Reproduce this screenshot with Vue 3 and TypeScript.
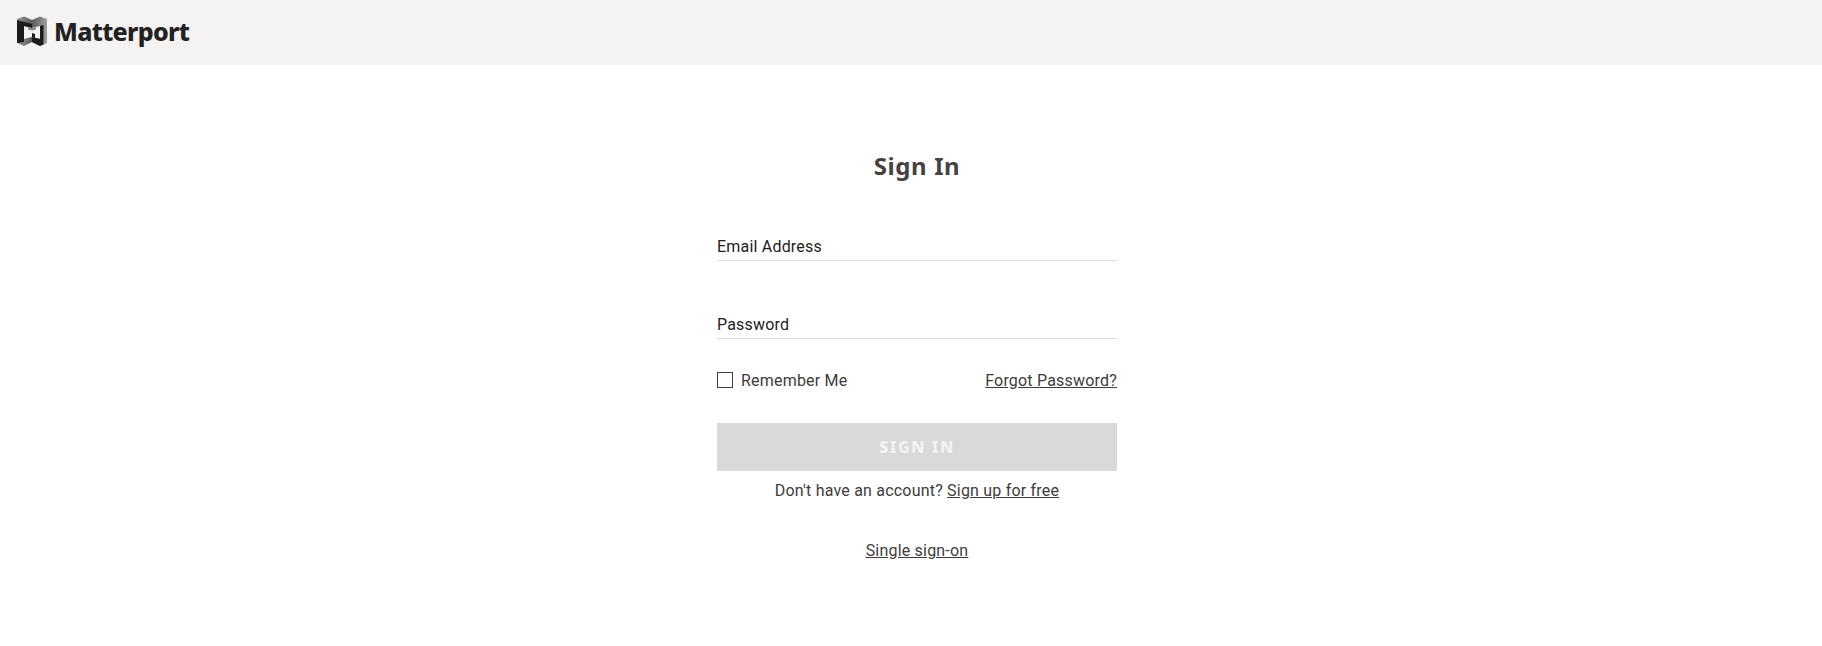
<script setup lang="ts">
import { ref } from 'vue';

const email = ref('');
const password = ref('');
const remember = ref(false);
</script>

<template>
    <div class="page">
        <header class="topbar">
            <a class="brand" href="#">
                <svg class="brand-mark" viewBox="0 0 30 30" width="30" height="30" aria-hidden="true">
                    <defs>
                        <linearGradient id="mark-top" x1="0" y1="0" x2="1" y2="0">
                            <stop offset="0" stop-color="#9a9a9a" />
                            <stop offset="0.5" stop-color="#5a5a5a" />
                            <stop offset="1" stop-color="#a0a0a0" />
                        </linearGradient>
                    </defs>
                    <!-- grey body with the window cut out -->
                    <path fill-rule="evenodd" fill="url(#mark-top)" d="M0 3 L7 0.5 L15 4 L23 0.5 L30 3 L30 27 L23 30 L15 26 L7 30 L0 27 Z M7 10 L15 12 L23 10 L23 23 L15 21 L7 23 Z" />
                    <!-- dark left column and band -->
                    <path fill="#1c1c1c" d="M0 4 L15 8 L15 12 L7 10 L7 26 L0 27 Z" />
                    <!-- dark right column and lower right face -->
                    <path fill="#1c1c1c" d="M23 10 L26.5 9 L26.5 28.5 L23 30 L15 26 L15 21 L23 23 Z" />
                    <path fill="#1c1c1c" d="M15 17 L18 18 L18 22 L15 21 Z" />
                    <path fill="#8a8a8a" d="M11 11 L15 12 L19 11 L19 13.5 L15 14.5 L11 13.5 Z" />
                </svg>
                <span class="brand-name">Matterport</span>
            </a>
        </header>

        <main class="content">
            <form class="signin" @submit.prevent>
                <h1 class="title">Sign In</h1>

                <label class="field field-email">
                    <input v-model="email" type="email" placeholder="Email Address" />
                </label>
                <label class="field field-password">
                    <input v-model="password" type="password" placeholder="Password" />
                </label>

                <div class="options">
                    <label class="remember">
                        <input v-model="remember" type="checkbox" />
                        <span>Remember Me</span>
                    </label>
                    <a href="#">Forgot Password?</a>
                </div>

                <button class="submit" type="submit" disabled>SIGN IN</button>

                <p class="signup">Don't have an account? <a href="#">Sign up for free</a></p>
                <p class="sso"><a href="#">Single sign-on</a></p>
            </form>
        </main>
    </div>
</template>

<style>
html,
body {
    margin: 0;
    background: #fff;
}
</style>

<style scoped>
.page {
    min-height: 646px;
    font-family: Roboto, "Liberation Sans", sans-serif;
    font-size: 16px;
    letter-spacing: 0.2px;
    color: #403c3c;
}

.topbar {
    height: 65px;
    display: flex;
    align-items: center;
    padding: 0 0 3px 17px;
    box-sizing: border-box;
    background: #f4f3f1;
}

.brand {
    display: flex;
    align-items: center;
    gap: 7px;
    text-decoration: none;
}

.brand-mark {
    display: block;
}

.brand-name {
    font-family: "Noto Sans", sans-serif;
    font-size: 25px;
    line-height: 30px;
    font-weight: 800;
    letter-spacing: -0.7px;
    color: #222;
}

.content {
    display: flex;
    justify-content: center;
    padding-left: 12px;
}

.signin {
    width: 400px;
    padding-top: 84px;
    box-sizing: border-box;
}

.title {
    margin: 0;
    text-align: center;
    font-family: "Noto Sans", sans-serif;
    font-size: 24px;
    line-height: 34px;
    font-weight: 700;
    letter-spacing: 0.6px;
    color: #464242;
}

.field {
    display: block;
    border-bottom: 1px solid #dcdcdc;
}

.field-email {
    margin-top: 47px;
}

.field-password {
    margin-top: 47px;
}

.field input {
    display: block;
    box-sizing: border-box;
    width: 100%;
    height: 30px;
    padding: 2px 0 0;
    border: 0;
    outline: 0;
    background: transparent;
    font: inherit;
    letter-spacing: inherit;
    color: #1f1c1c;
}

.field input::placeholder {
    color: #1f1c1c;
    opacity: 1;
}

.options {
    display: flex;
    align-items: center;
    justify-content: space-between;
    margin-top: 32px;
    line-height: 20px;
}

.remember {
    display: flex;
    align-items: center;
    gap: 8px;
}

.remember input {
    appearance: none;
    box-sizing: border-box;
    width: 16px;
    height: 16px;
    margin: -2px 0 0;
    border: 1px solid #403c3c;
    background: #fff;
}

a {
    color: #403c3c;
}

.submit {
    display: block;
    width: 100%;
    height: 48px;
    margin-top: 32px;
    border: 0;
    background: #d9d9d9;
    font-family: "Noto Sans", sans-serif;
    font-size: 16px;
    font-weight: 800;
    letter-spacing: 1.6px;
    color: #f3f3f3;
}

.signup,
.sso {
    margin: 0;
    text-align: center;
    line-height: 20px;
}

.signup {
    margin-top: 10px;
}

.sso {
    margin-top: 40px;
}
</style>
